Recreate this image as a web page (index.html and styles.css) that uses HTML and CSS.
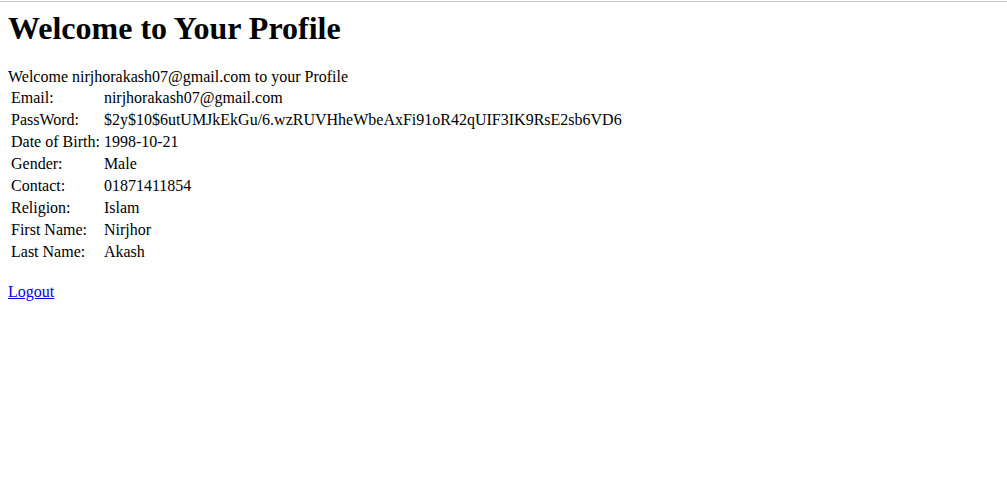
FILE: index.html
```html
<!DOCTYPE html>
<html>
<head>
<meta charset="utf-8">
<link rel="stylesheet" href="styles.css">
</head>
<body>
<div class="topline"></div>
<div class="page">
<h1 class="title">Welcome to Your Profile</h1>
<div class="welcome">Welcome nirjhorakash07@gmail.com to your Profile</div>
<table class="info">
<tr><td>Email:</td><td>nirjhorakash07@gmail.com</td></tr>
<tr><td>PassWord:</td><td>$2y$10$6utUMJkEkGu/6.wzRUVHheWbeAxFi91oR42qUIF3IK9RsE2sb6VD6</td></tr>
<tr><td>Date of Birth:</td><td>1998-10-21</td></tr>
<tr><td>Gender:</td><td>Male</td></tr>
<tr><td>Contact:</td><td>01871411854</td></tr>
<tr><td>Religion:</td><td>Islam</td></tr>
<tr><td>First Name:</td><td>Nirjhor</td></tr>
<tr><td>Last Name:</td><td>Akash</td></tr>
</table>
<p class="logout"><a href="#">Logout</a></p>
</div>
</body>
</html>
```
FILE: styles.css
```css
html, body {
  margin: 0;
  padding: 0;
  background: #fff;
}
body {
  font-family: "Liberation Serif", "Times New Roman", serif;
  font-size: 16px;
  color: #000;
}
.topline {
  height: 1px;
  margin-top: 1px;
  background: #c6c6c6;
}
.page {
  padding: 0 8px;
}
.title {
  font-size: 32px;
  font-weight: bold;
  margin: 8px 0 21.44px;
}
.info {
  border-spacing: 2px;
  border-collapse: separate;
  font-size: 16px;
}
.info td {
  padding: 1px;
}
.logout {
  margin: 19px 0 16px;
}
.logout a {
  color: #0000ee;
}
```
